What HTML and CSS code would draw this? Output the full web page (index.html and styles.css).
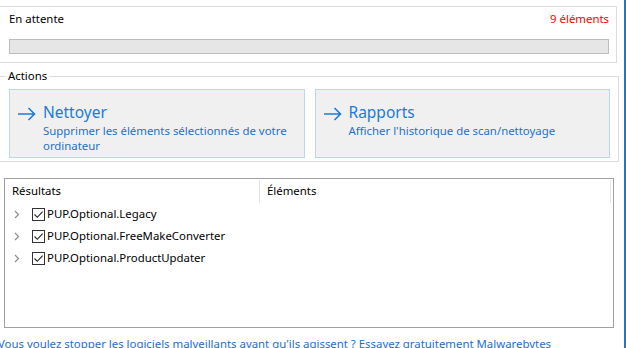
FILE: index.html
```html
<!DOCTYPE html>
<html lang="fr">
<head>
<meta charset="utf-8">
<link rel="stylesheet" href="styles.css">
</head>
<body>
<div class="window">
  <div class="content">
    <section class="status">
      <div class="status-row">
        <span class="status-label">En attente</span>
        <span class="status-count">9 éléments</span>
      </div>
      <div class="progress"></div>
    </section>

    <fieldset class="actions">
      <legend class="actions-legend">Actions</legend>
      <div class="action-grid">
        <div class="action-btn">
          <svg class="arrow" width="19" height="14" viewBox="0 0 19 14"><path d="M1 7H17.5M11.5 1L17.5 7L11.5 13" fill="none" stroke="#1c7cd5" stroke-width="1.6"/></svg>
          <div class="action-text">
            <div class="action-title">Nettoyer</div>
            <div class="action-desc">Supprimer les éléments sélectionnés de votre ordinateur</div>
          </div>
        </div>
        <div class="action-btn">
          <svg class="arrow" width="19" height="14" viewBox="0 0 19 14"><path d="M1 7H17.5M11.5 1L17.5 7L11.5 13" fill="none" stroke="#1c7cd5" stroke-width="1.6"/></svg>
          <div class="action-text">
            <div class="action-title">Rapports</div>
            <div class="action-desc">Afficher l'historique de scan/nettoyage</div>
          </div>
        </div>
      </div>
    </fieldset>

    <div class="results">
      <div class="results-head">
        <div class="col col-name">Résultats</div>
        <div class="col col-items">Éléments</div>
        <div class="col col-end"></div>
      </div>
      <div class="row">
        <svg class="chev" width="6" height="9" viewBox="0 0 6 9"><path d="M1 1L4.5 4.5L1 8" fill="none" stroke="#8c8c8c" stroke-width="1.2"/></svg>
        <span class="check"><svg width="11" height="11" viewBox="0 0 11 11"><path d="M1.5 5.5L4.3 8.3L9.6 2.6" fill="none" stroke="#222" stroke-width="1.1"/></svg></span>
        <span class="row-text">PUP.Optional.Legacy</span>
      </div>
      <div class="row">
        <svg class="chev" width="6" height="9" viewBox="0 0 6 9"><path d="M1 1L4.5 4.5L1 8" fill="none" stroke="#8c8c8c" stroke-width="1.2"/></svg>
        <span class="check"><svg width="11" height="11" viewBox="0 0 11 11"><path d="M1.5 5.5L4.3 8.3L9.6 2.6" fill="none" stroke="#222" stroke-width="1.1"/></svg></span>
        <span class="row-text">PUP.Optional.FreeMakeConverter</span>
      </div>
      <div class="row">
        <svg class="chev" width="6" height="9" viewBox="0 0 6 9"><path d="M1 1L4.5 4.5L1 8" fill="none" stroke="#8c8c8c" stroke-width="1.2"/></svg>
        <span class="check"><svg width="11" height="11" viewBox="0 0 11 11"><path d="M1.5 5.5L4.3 8.3L9.6 2.6" fill="none" stroke="#222" stroke-width="1.1"/></svg></span>
        <span class="row-text">PUP.Optional.ProductUpdater</span>
      </div>
    </div>

    <a class="promo" href="#">Vous voulez stopper les logiciels malveillants avant qu'ils agissent ? Essayez gratuitement Malwarebytes</a>
  </div>
  <div class="accent"></div>
</div>
</body>
</html>
```

FILE: styles.css
```css
* { box-sizing: border-box; }
html, body {
  margin: 0;
  padding: 0;
  background: #ffffff;
  overflow: hidden;
}
body {
  font-family: "Noto Sans", "Open Sans", sans-serif;
  font-size: 11.4px;
  color: #000;
  width: 626px;
  height: 348px;
}
.window {
  display: flex;
  height: 348px;
}
.content {
  width: 624px;
  display: flex;
  flex-direction: column;
  padding-top: 6px;
}
.content > * { flex-shrink: 0; }
.accent {
  width: 2px;
  background: #1979ca;
}

.status {
  width: 617px;
  border: 1px solid #dcdcdc;
  border-left: none;
  padding: 4px 7px 8px 9px;
}
.status-row {
  display: flex;
  justify-content: space-between;
  height: 16px;
  line-height: 16px;
}
.status-count { color: #ff0000; }
.progress {
  margin-top: 12px;
  height: 15px;
  background: #e6e6e6;
  border: 1px solid #bcbcbc;
}

.actions {
  margin: 5px 0 0 0;
  width: 619px;
  border: 1px solid #dcdcdc;
  border-left: none;
  padding: 5px 8px 3px 9px;
  min-width: 0;
}
.actions-legend {
  padding: 0 2px;
  margin-left: -3px;
  line-height: 16px;
  height: 16px;
}
.action-grid {
  display: flex;
  gap: 10px;
}
.action-btn {
  flex: 1;
  height: 69px;
  background: #f0f0f0;
  border: 1px solid #bcd6ee;
  display: flex;
  align-items: flex-start;
  padding: 15px 6px 0 7px;
  gap: 7px;
}
.arrow { margin-top: 2px; flex: none; }
.action-title {
  font-size: 15.5px;
  line-height: 18px;
  color: #1c7cd5;
  margin-top: -2px;
}
.action-desc {
  color: #1f70c8;
  line-height: 15px;
  margin-top: 2px;
}

.results {
  margin: 16px 0 0 4px;
  width: 610px;
  height: 150px;
  border: 1px solid #a0a0a0;
}
.results-head {
  display: flex;
  height: 24px;
  align-items: stretch;
  padding-top: 1px;
}
.col {
  line-height: 22px;
  padding-left: 7px;
}
.col-name { width: 255px; border-right: 1px solid #e5e5e5; }
.col-items { flex: 1; }
.col-end { width: 2px; padding: 0; border-left: 1px solid #e5e5e5; margin-right: 1px; }
.row {
  display: flex;
  align-items: center;
  height: 22px;
}
.chev {
  margin: 0 12px 0 9px;
  flex: none;
}
.check {
  width: 13px;
  height: 13px;
  border: 1px solid #333;
  display: flex;
  align-items: center;
  justify-content: center;
  margin-right: 2px;
}
.row-text { line-height: 22px; }

.promo {
  margin: 8px 0 0 -2px;
  color: #1a6fd0;
  text-decoration: none;
  white-space: nowrap;
  line-height: 16px;
}
```
